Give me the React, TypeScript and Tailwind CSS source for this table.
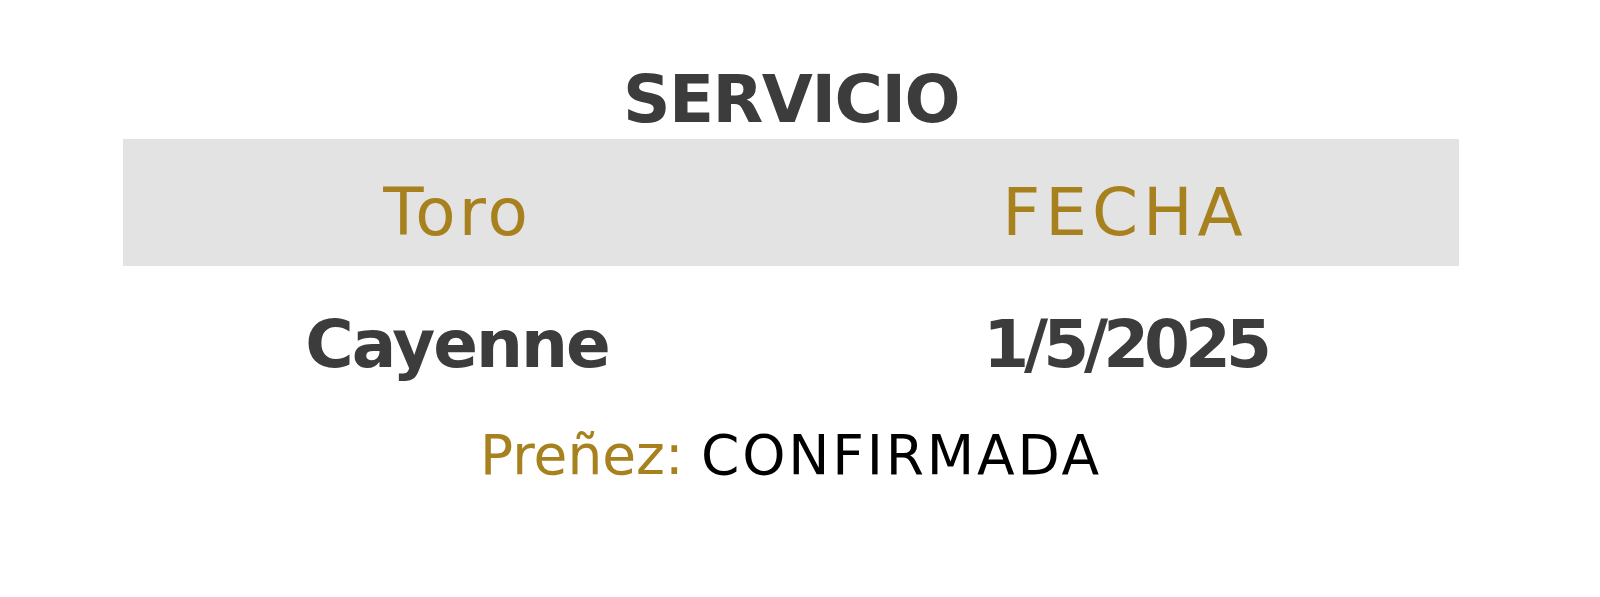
export default function App() {
  return (
    <div className="min-h-screen bg-white font-['DejaVu_Sans',sans-serif]">
      <div className="ml-[123px] w-[1336px] pt-[67px]">
        <h1 className="text-center text-[66px] leading-[66px] font-bold text-[#3c3c3c] tracking-[-1.5px]">
          SERVICIO
        </h1>
        <div className="mt-[6px] grid h-[127px] grid-cols-2 bg-[#e3e3e3] pt-[41px] text-[66px] leading-[66px] text-[#a8811f]">
          <div className="text-center tracking-[3px]">Toro</div>
          <div className="text-center tracking-[5px]">FECHA</div>
        </div>
        <div className="mt-[46px] grid grid-cols-2 text-[66px] leading-[66px] font-bold text-[#3c3c3c]">
          <div className="text-center tracking-[-2px]">Cayenne</div>
          <div className="text-center tracking-[-5px]">1/5/2025</div>
        </div>
        <p className="mt-[50px] text-center text-[55px] leading-[55px]">
          <span className="text-[#a8811f]">Preñez:</span>{" "}
          <span className="text-black tracking-[2.8px]">CONFIRMADA</span>
        </p>
      </div>
    </div>
  );
}
